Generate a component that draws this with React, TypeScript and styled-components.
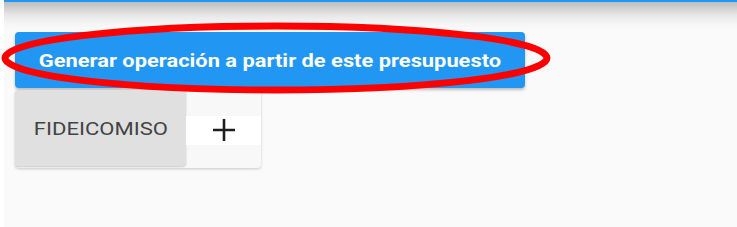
import styled, { createGlobalStyle } from "styled-components";

const GlobalStyle = createGlobalStyle`
  html, body {
    margin: 0;
    padding: 0;
    background: #ffffff;
    font-family: Roboto, "Noto Sans", Arial, sans-serif;
  }
`;

const App = () => {
  return (
    <>
      <GlobalStyle />
      <StyledFrame>
        <StyledMain>
          <StyledTopBar />
          <StyledShade />
          <StyledContent>
            <StyledGenerateButton>
              <StyledWideText>Generar operación a partir de este presupuesto</StyledWideText>
            </StyledGenerateButton>
            <StyledTabs>
              <StyledTab active>
                <StyledWideText>Fideicomiso</StyledWideText>
              </StyledTab>
              <StyledAddTab>
                <StyledAddBand>
                  <svg width="24" height="24" viewBox="0 0 24 24">
                    <path d="M12 1v22M1 12h22" stroke="#1e1e1e" strokeWidth="2.6" fill="none" />
                  </svg>
                </StyledAddBand>
              </StyledAddTab>
            </StyledTabs>
          </StyledContent>
        </StyledMain>
        <StyledMark viewBox="0 0 737 227" width="737" height="227">
          <ellipse cx="276" cy="58" rx="271" ry="32" fill="none" stroke="#ff0000" strokeWidth="7" />
        </StyledMark>
      </StyledFrame>
    </>
  );
};

export default App;

const StyledFrame = styled.div`
  position: relative;
  width: 737px;
  height: 227px;
  overflow: hidden;
  display: flex;
`;

const StyledMain = styled.div`
  flex: 1;
  margin-left: 4px;
  background: #fafafa;
  display: flex;
  flex-direction: column;
`;

const StyledTopBar = styled.div`
  height: 2px;
  background: #2196f3;
`;

const StyledShade = styled.div`
  height: 28px;
  background: linear-gradient(to bottom, #bdbdbd 0%, #e6e6e6 45%, #f6f6f6 80%, #fafafa 100%);
`;

const StyledContent = styled.div`
  padding: 2px 0 0 11px;
  display: flex;
  flex-direction: column;
  align-items: flex-start;
  gap: 2px;
`;

const StyledWideText = styled.span`
  display: inline-block;
  transform: scaleX(1.15);
  transform-origin: center;
  white-space: nowrap;
`;

const StyledGenerateButton = styled.button`
  width: 510px;
  height: 56px;
  border: none;
  border-radius: 4px;
  background: #2196f3;
  color: #ffffff;
  font-family: Roboto, "Noto Sans", Arial, sans-serif;
  font-size: 19px;
  font-weight: 700;
  display: flex;
  align-items: center;
  justify-content: center;
  padding: 0 0 0 0;
  box-shadow: 0 2px 3px rgba(0, 0, 0, 0.25);
`;

const StyledTabs = styled.div`
  display: flex;
  width: 246px;
  height: 78px;
  border-radius: 4px;
  background: #f8f8f8;
  box-shadow: 0 1px 3px rgba(0, 0, 0, 0.2);
  overflow: hidden;
`;

const StyledTab = styled.div<{ active?: boolean }>`
  width: 171px;
  height: 76px;
  display: flex;
  align-items: center;
  justify-content: center;
  background: ${(p) => (p.active ? "#e0e0e0" : "transparent")};
  color: #444444;
  font-size: 19px;
  text-transform: uppercase;
  border-radius: 0 0 4px 0;
  box-shadow: ${(p) => (p.active ? "0 1px 2px rgba(0,0,0,0.2)" : "none")};

  ${StyledWideText} {
    transform: scaleX(1.16);
  }
`;

const StyledAddTab = styled.div`
  flex: 1;
  display: flex;
  align-items: center;
`;

const StyledAddBand = styled.div`
  width: 100%;
  height: 29px;
  margin-top: 2px;
  background: #ffffff;
  display: flex;
  align-items: center;
  justify-content: center;
`;

const StyledMark = styled.svg`
  position: absolute;
  left: 0;
  top: 0;
  pointer-events: none;
`;
